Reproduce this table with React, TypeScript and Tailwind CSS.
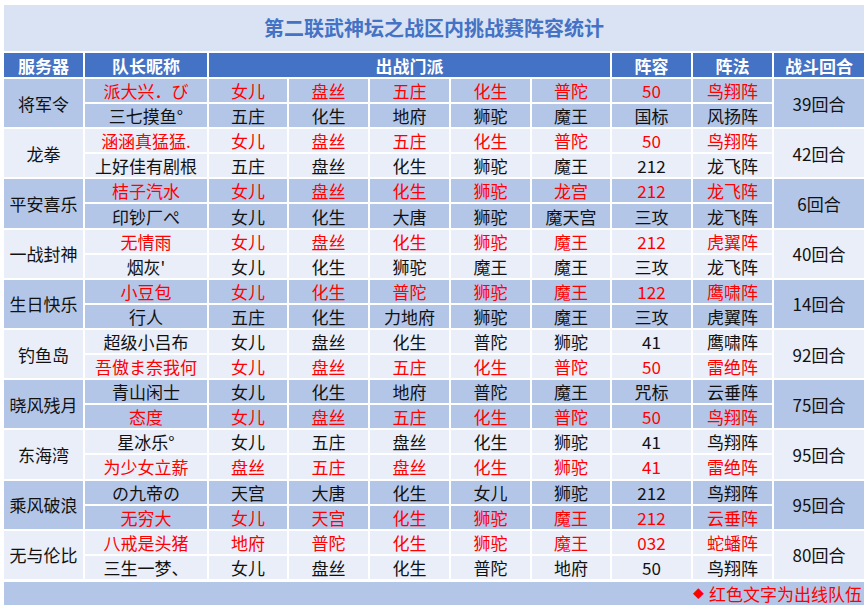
type Row = {
  name: string;
  sects: string[];
  lineup: string;
  formation: string;
  red: boolean;
};

type Group = {
  server: string;
  rounds: string;
  rows: [Row, Row];
};

const r = (name: string, sects: string, lineup: string, formation: string, red = false): Row => ({
  name,
  sects: sects.split(" "),
  lineup,
  formation,
  red,
});

const groups: Group[] = [
  {
    server: "将军令",
    rounds: "39回合",
    rows: [
      r("派大兴．び", "女儿 盘丝 五庄 化生 普陀", "50", "鸟翔阵", true),
      r("三七摸鱼°", "五庄 化生 地府 狮驼 魔王", "国标", "风扬阵"),
    ],
  },
  {
    server: "龙拳",
    rounds: "42回合",
    rows: [
      r("涵涵真猛猛.", "女儿 盘丝 五庄 化生 普陀", "50", "鸟翔阵", true),
      r("上好佳有剧根", "五庄 盘丝 化生 狮驼 魔王", "212", "龙飞阵"),
    ],
  },
  {
    server: "平安喜乐",
    rounds: "6回合",
    rows: [
      r("桔子汽水", "女儿 盘丝 化生 狮驼 龙宫", "212", "龙飞阵", true),
      r("印钞厂ぺ", "女儿 化生 大唐 狮驼 魔天宫", "三攻", "龙飞阵"),
    ],
  },
  {
    server: "一战封神",
    rounds: "40回合",
    rows: [
      r("无情雨", "女儿 盘丝 化生 狮驼 魔王", "212", "虎翼阵", true),
      r("烟灰'", "女儿 化生 狮驼 魔王 魔王", "三攻", "龙飞阵"),
    ],
  },
  {
    server: "生日快乐",
    rounds: "14回合",
    rows: [
      r("小豆包", "女儿 化生 普陀 狮驼 魔王", "122", "鹰啸阵", true),
      r("行人", "五庄 化生 力地府 狮驼 魔王", "三攻", "虎翼阵"),
    ],
  },
  {
    server: "钓鱼岛",
    rounds: "92回合",
    rows: [
      r("超级小吕布", "女儿 盘丝 化生 普陀 狮驼", "41", "鹰啸阵"),
      r("吾傲ま奈我何", "女儿 盘丝 五庄 化生 普陀", "50", "雷绝阵", true),
    ],
  },
  {
    server: "晓风残月",
    rounds: "75回合",
    rows: [
      r("青山闲士", "女儿 化生 地府 普陀 魔王", "咒标", "云垂阵"),
      r("态度", "女儿 盘丝 五庄 化生 普陀", "50", "鸟翔阵", true),
    ],
  },
  {
    server: "东海湾",
    rounds: "95回合",
    rows: [
      r("星冰乐°", "女儿 五庄 盘丝 化生 狮驼", "41", "鸟翔阵"),
      r("为少女立薪", "盘丝 五庄 盘丝 化生 狮驼", "41", "雷绝阵", true),
    ],
  },
  {
    server: "乘风破浪",
    rounds: "95回合",
    rows: [
      r("の九帝の", "天宫 大唐 化生 女儿 狮驼", "212", "鸟翔阵"),
      r("无穷大", "女儿 天宫 化生 狮驼 魔王", "212", "云垂阵", true),
    ],
  },
  {
    server: "无与伦比",
    rounds: "80回合",
    rows: [
      r("八戒是头猪", "地府 普陀 化生 狮驼 魔王", "032", "蛇蟠阵", true),
      r("三生一梦、", "女儿 盘丝 化生 普陀 地府", "50", "鸟翔阵"),
    ],
  },
];

const cell = "flex items-center justify-center leading-none whitespace-nowrap";

export default function App() {
  return (
    <div
      className="w-[868px] h-[612px] bg-white pt-[5px] pl-[4px] text-[17px] text-[#111]"
      style={{ fontFamily: '"Noto Sans CJK SC", "Noto Sans", sans-serif' }}
    >
      <div className="w-[860px]">
        <div className="h-[46px] bg-[#dae3f3] flex items-center justify-center text-[20px] font-bold text-[#4472c4] leading-none">
          第二联武神坛之战区内挑战赛阵容统计
        </div>

        <div className="mt-[2px] grid grid-cols-[79px_122px_78px_79px_79px_79px_78px_79px_79px_90px] grid-rows-[24px] auto-rows-[23.1px] gap-[2px]">
          <div className={`${cell} bg-[#4472c4] text-white font-bold`}>服务器</div>
          <div className={`${cell} bg-[#4472c4] text-white font-bold`}>队长昵称</div>
          <div className={`${cell} col-span-5 bg-[#4472c4] text-white font-bold`}>出战门派</div>
          <div className={`${cell} bg-[#4472c4] text-white font-bold`}>阵容</div>
          <div className={`${cell} bg-[#4472c4] text-white font-bold`}>阵法</div>
          <div className={`${cell} bg-[#4472c4] text-white font-bold`}>战斗回合</div>

          {groups.map((g, gi) => {
            const bg = gi % 2 === 0 ? "bg-[#b4c6e7]" : "bg-[#e9eef8]";
            return g.rows.map((row, ri) => {
              const color = row.red ? "text-[#ff0000]" : "text-[#111]";
              return [
                ri === 0 ? (
                  <div key={`${gi}-s`} className={`${cell} ${bg} row-span-2`}>
                    {g.server}
                  </div>
                ) : null,
                <div key={`${gi}-${ri}-n`} className={`${cell} ${bg} ${color}`}>
                  {row.name}
                </div>,
                ...row.sects.map((s, si) => (
                  <div key={`${gi}-${ri}-${si}`} className={`${cell} ${bg} ${color}`}>
                    {s}
                  </div>
                )),
                <div key={`${gi}-${ri}-l`} className={`${cell} ${bg} ${color}`}>
                  {row.lineup}
                </div>,
                <div key={`${gi}-${ri}-f`} className={`${cell} ${bg} ${color}`}>
                  {row.formation}
                </div>,
                ri === 0 ? (
                  <div key={`${gi}-r`} className={`${cell} ${bg} row-span-2`}>
                    {g.rounds}
                  </div>
                ) : null,
              ];
            });
          })}
        </div>

        <div className="mt-[3px] h-[23px] bg-[#b4c6e7] flex items-center justify-end pr-[2px] text-[#ff0000] leading-none">
          <span className="text-[11px] mr-[5px]">◆</span>
          <span>红色文字为出线队伍</span>
        </div>
      </div>
    </div>
  );
}
